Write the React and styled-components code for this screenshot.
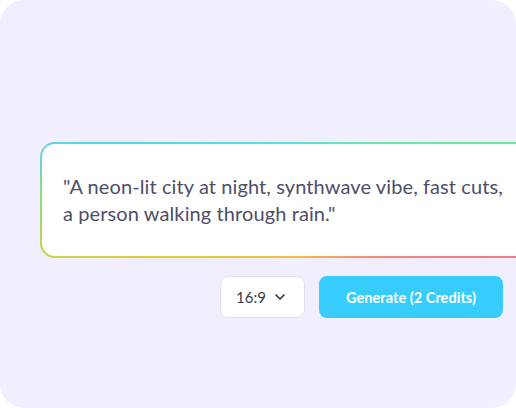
import React from "react";
import styled, { createGlobalStyle } from "styled-components";
import { ChevronDown } from "lucide-react";

const GlobalStyle = createGlobalStyle`
  html, body {
    margin: 0;
    padding: 0;
    background: #ffffff;
  }
  * {
    box-sizing: border-box;
  }
`;

const Panel = styled.div`
  width: 516px;
  height: 408px;
  border-radius: 24px;
  background: #f0eeff;
  overflow: hidden;
  padding: 142px 13px 0 40px;
  display: flex;
  flex-direction: column;
  gap: 18px;
  font-family: Lato, "Noto Sans", sans-serif;
`;

const PromptCard = styled.div`
  width: 520px;
  border: 2px solid transparent;
  border-radius: 15px;
  background:
    linear-gradient(#ffffff, #ffffff) padding-box,
    conic-gradient(
      from 0deg,
      #60e0dc 0deg,
      #6ee8a0 75deg,
      #f27a8c 105deg,
      #fcbc3c 180deg,
      #e4d02c 250deg,
      #90dc78 270deg,
      #58d4f6 285deg,
      #60e0dc 360deg
    ) border-box;
  padding: 29px 21px;
`;

const PromptText = styled.p`
  margin: 0;
  font-size: 20px;
  line-height: 27px;
  letter-spacing: 0.1px;
  color: #4e4e6a;
  white-space: nowrap;
`;

const Controls = styled.div`
  display: flex;
  justify-content: flex-end;
  align-items: center;
  gap: 14px;
`;

const RatioSelect = styled.button`
  width: 85px;
  height: 42px;
  border: 1px solid #e2def0;
  border-radius: 8px;
  background: #ffffff;
  display: flex;
  align-items: center;
  justify-content: space-between;
  padding: 0 16px 0 15px;
  font-family: inherit;
  font-size: 15px;
  color: #3a3a4c;
  cursor: pointer;
`;

const GenerateButton = styled.button`
  width: 184px;
  height: 42px;
  border: none;
  border-radius: 8px;
  background: #36ccfc;
  color: #ffffff;
  font-family: inherit;
  font-weight: 700;
  font-size: 14.6px;
  cursor: pointer;
`;

export default function App() {
  return (
    <>
      <GlobalStyle />
      <Panel>
        <PromptCard>
          <PromptText>
            "A neon-lit city at night, synthwave vibe, fast cuts,
            <br />
            a person walking through rain."
          </PromptText>
        </PromptCard>
        <Controls>
          <RatioSelect>
            16:9
            <ChevronDown size={16} strokeWidth={2.6} color="#3a3a4c" />
          </RatioSelect>
          <GenerateButton>Generate (2 Credits)</GenerateButton>
        </Controls>
      </Panel>
    </>
  );
}
